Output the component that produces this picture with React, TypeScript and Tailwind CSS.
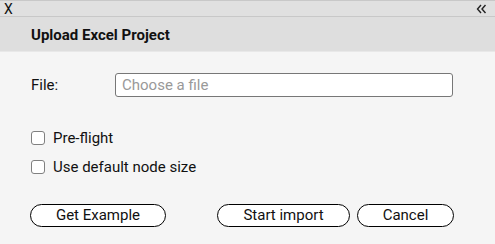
import React from 'react'

const App: React.FC = () => {
  return (
    <div className="flex h-[244px] w-[495px] flex-col bg-[#f5f5f5] font-['Roboto',sans-serif] text-[15px] text-[#111]">
      <div className="flex h-[17px] items-center justify-between border-y border-[#c8c8c8] bg-[#e0e0e0] px-[4px] text-[14px] leading-none">
        <span>X</span>
        <svg width="11" height="10" viewBox="0 0 11 10" className="mr-[4px]" fill="none" stroke="#222" strokeWidth="1.4">
          <path d="M5 1 L1.5 5 L5 9" />
          <path d="M9.5 1 L6 5 L9.5 9" />
        </svg>
      </div>
      <div className="flex h-[35px] items-center border-b border-[#e8e8e8] bg-[#dedede] pl-[31px] pt-[3px] text-[15px] font-bold">
        Upload Excel Project
      </div>
      <div className="flex flex-1 flex-col px-[31px] pt-[21px]">
        <div className="flex h-[24px] items-center">
          <label className="w-[84px]">File:</label>
          <input
            readOnly
            placeholder="Choose a file"
            className="h-[24px] w-[338px] rounded-[3px] border border-[#777] bg-white px-[6px] text-[15px] outline-none placeholder:text-[#999]"
          />
        </div>
        <div className="mt-[31px] flex flex-col gap-[9px]">
          <label className="flex h-[20px] items-center gap-[8px]">
            <span className="h-[14px] w-[14px] rounded-[3px] border border-[#808080] bg-white" />
            Pre-flight
          </label>
          <label className="flex h-[20px] items-center gap-[8px]">
            <span className="h-[14px] w-[14px] rounded-[3px] border border-[#808080] bg-white" />
            Use default node size
          </label>
        </div>
        <div className="mt-[27px] flex items-center">
          <button className="ml-[-1px] h-[23px] w-[136px] rounded-full border border-black bg-white leading-none">
            Get Example
          </button>
          <button className="ml-[51px] h-[23px] w-[133px] rounded-full border border-black bg-white leading-none">
            Start import
          </button>
          <button className="ml-[7px] h-[23px] w-[97px] rounded-full border border-black bg-white leading-none">
            Cancel
          </button>
        </div>
      </div>
    </div>
  )
}

export default App
